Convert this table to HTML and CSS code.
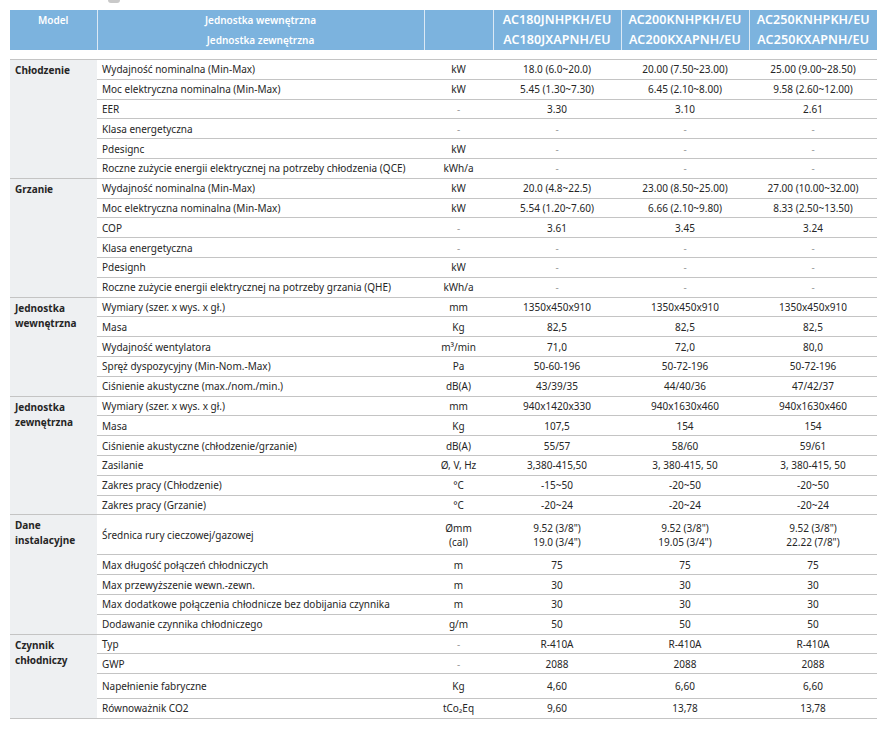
FILE: index.html
```html
<!DOCTYPE html>
<html lang="pl">
<head>
<meta charset="utf-8">
<link rel="stylesheet" href="styles.css">
</head>
<body>
<div class="deco"></div>
<table class="spec">
  <colgroup>
    <col class="c-model"><col class="c-label"><col class="c-unit"><col class="c-val"><col class="c-val"><col class="c-val">
  </colgroup>
  <thead>
    <tr class="head">
      <th class="h-model">Model</th>
      <th class="h-units">Jednostka wewnętrzna<br>Jednostka zewnętrzna</th>
      <th></th>
      <th class="h-name">AC180JNHPKH/EU<br>AC180JXAPNH/EU</th>
      <th class="h-name">AC200KNHPKH/EU<br>AC200KXAPNH/EU</th>
      <th class="h-name">AC250KNHPKH/EU<br>AC250KXAPNH/EU</th>
    </tr>
    <tr class="spacer"><td colspan="6"></td></tr>
  </thead>
  <tbody>
    <tr class="first"><th class="grp" rowspan="6">Chłodzenie</th><td class="lbl">Wydajność nominalna (Min-Max)</td><td class="unit">kW</td><td>18.0 (6.0~20.0)</td><td>20.00 (7.50~23.00)</td><td>25.00 (9.00~28.50)</td></tr>
    <tr><td class="lbl">Moc elektryczna nominalna (Min-Max)</td><td class="unit">kW</td><td>5.45 (1.30~7.30)</td><td>6.45 (2.10~8.00)</td><td>9.58 (2.60~12.00)</td></tr>
    <tr><td class="lbl">EER</td><td class="unit dash">-</td><td>3.30</td><td>3.10</td><td>2.61</td></tr>
    <tr><td class="lbl">Klasa energetyczna</td><td class="unit dash">-</td><td class="dash">-</td><td class="dash">-</td><td class="dash">-</td></tr>
    <tr><td class="lbl">Pdesignc</td><td class="unit">kW</td><td class="dash">-</td><td class="dash">-</td><td class="dash">-</td></tr>
    <tr><td class="lbl">Roczne zużycie energii elektrycznej na potrzeby chłodzenia (QCE)</td><td class="unit">kWh/a</td><td class="dash">-</td><td class="dash">-</td><td class="dash">-</td></tr>

    <tr class="first"><th class="grp" rowspan="6">Grzanie</th><td class="lbl">Wydajność nominalna (Min-Max)</td><td class="unit">kW</td><td>20.0 (4.8~22.5)</td><td>23.00 (8.50~25.00)</td><td>27.00 (10.00~32.00)</td></tr>
    <tr><td class="lbl">Moc elektryczna nominalna (Min-Max)</td><td class="unit">kW</td><td>5.54 (1.20~7.60)</td><td>6.66 (2.10~9.80)</td><td>8.33 (2.50~13.50)</td></tr>
    <tr><td class="lbl">COP</td><td class="unit dash">-</td><td>3.61</td><td>3.45</td><td>3.24</td></tr>
    <tr><td class="lbl">Klasa energetyczna</td><td class="unit dash">-</td><td class="dash">-</td><td class="dash">-</td><td class="dash">-</td></tr>
    <tr><td class="lbl">Pdesignh</td><td class="unit">kW</td><td class="dash">-</td><td class="dash">-</td><td class="dash">-</td></tr>
    <tr><td class="lbl">Roczne zużycie energii elektrycznej na potrzeby grzania (QHE)</td><td class="unit">kWh/a</td><td class="dash">-</td><td class="dash">-</td><td class="dash">-</td></tr>

    <tr class="first"><th class="grp" rowspan="5">Jednostka wewnętrzna</th><td class="lbl">Wymiary (szer. x wys. x gł.)</td><td class="unit">mm</td><td>1350x450x910</td><td>1350x450x910</td><td>1350x450x910</td></tr>
    <tr><td class="lbl">Masa</td><td class="unit">Kg</td><td>82,5</td><td>82,5</td><td>82,5</td></tr>
    <tr><td class="lbl">Wydajność wentylatora</td><td class="unit">m³/min</td><td>71,0</td><td>72,0</td><td>80,0</td></tr>
    <tr><td class="lbl">Spręż dyspozycyjny (Min-Nom.-Max)</td><td class="unit">Pa</td><td>50-60-196</td><td>50-72-196</td><td>50-72-196</td></tr>
    <tr><td class="lbl">Ciśnienie akustyczne (max./nom./min.)</td><td class="unit">dB(A)</td><td>43/39/35</td><td>44/40/36</td><td>47/42/37</td></tr>

    <tr class="first"><th class="grp" rowspan="6">Jednostka zewnętrzna</th><td class="lbl">Wymiary (szer. x wys. x gł.)</td><td class="unit">mm</td><td>940x1420x330</td><td>940x1630x460</td><td>940x1630x460</td></tr>
    <tr><td class="lbl">Masa</td><td class="unit">Kg</td><td>107,5</td><td>154</td><td>154</td></tr>
    <tr><td class="lbl">Ciśnienie akustyczne (chłodzenie/grzanie)</td><td class="unit">dB(A)</td><td>55/57</td><td>58/60</td><td>59/61</td></tr>
    <tr><td class="lbl">Zasilanie</td><td class="unit">Ø, V, Hz</td><td>3,380-415,50</td><td>3, 380-415, 50</td><td>3, 380-415, 50</td></tr>
    <tr><td class="lbl">Zakres pracy (Chłodzenie)</td><td class="unit">°C</td><td>-15~50</td><td>-20~50</td><td>-20~50</td></tr>
    <tr><td class="lbl">Zakres pracy (Grzanie)</td><td class="unit">°C</td><td>-20~24</td><td>-20~24</td><td>-20~24</td></tr>

    <tr class="first tall"><th class="grp" rowspan="5">Dane instalacyjne</th><td class="lbl">Średnica rury cieczowej/gazowej</td><td class="unit">Ømm<br>(cal)</td><td>9.52 (3/8")<br>19.0 (3/4")</td><td>9.52 (3/8")<br>19.05 (3/4")</td><td>9.52 (3/8")<br>22.22 (7/8")</td></tr>
    <tr><td class="lbl">Max długość połączeń chłodniczych</td><td class="unit">m</td><td>75</td><td>75</td><td>75</td></tr>
    <tr><td class="lbl">Max przewyższenie wewn.-zewn.</td><td class="unit">m</td><td>30</td><td>30</td><td>30</td></tr>
    <tr><td class="lbl">Max dodatkowe połączenia chłodnicze bez dobijania czynnika</td><td class="unit">m</td><td>30</td><td>30</td><td>30</td></tr>
    <tr><td class="lbl">Dodawanie czynnika chłodniczego</td><td class="unit">g/m</td><td>50</td><td>50</td><td>50</td></tr>

    <tr class="first"><th class="grp" rowspan="4">Czynnik chłodniczy</th><td class="lbl">Typ</td><td class="unit dash">-</td><td>R-410A</td><td>R-410A</td><td>R-410A</td></tr>
    <tr><td class="lbl">GWP</td><td class="unit dash">-</td><td>2088</td><td>2088</td><td>2088</td></tr>
    <tr class="mid"><td class="lbl">Napełnienie fabryczne</td><td class="unit">Kg</td><td>4,60</td><td>6,60</td><td>6,60</td></tr>
    <tr class="last"><td class="lbl">Równoważnik CO2</td><td class="unit">tCo₂Eq</td><td>9,60</td><td>13,78</td><td>13,78</td></tr>
  </tbody>
</table>
</body>
</html>
```

FILE: styles.css
```css
html, body {
  margin: 0;
  padding: 0;
  background: #ffffff;
}
body {
  padding: 0 0 0 10px;
  font-family: "Noto Sans", "Open Sans", sans-serif;
  color: #262626;
}
.deco {
  width: 12px;
  height: 3px;
  margin-left: 98px;
  border-radius: 0 0 8px 8px;
  background: #c9c9c9;
}
.spec {
  margin-top: 7px;
  border-collapse: collapse;
  table-layout: fixed;
  width: 867px;
  font-size: 10px;
}
.c-model { width: 87px; }
.c-label { width: 327px; }
.c-unit { width: 69px; }
.c-val { width: 128px; }

.head th {
  background: #7cb3de;
  color: #ffffff;
  height: 40px;
  padding: 0;
  border-left: 1px solid #dbe9f5;
  font-weight: 600;
  vertical-align: top;
}
.head th:first-child { border-left: none; }
.h-model {
  font-size: 10px;
  line-height: 20px;
}
.h-units {
  font-size: 10px;
  line-height: 20px;
}
.h-name {
  font-size: 12.5px;
  line-height: 20px;
  letter-spacing: 0.1px;
}
.spacer td {
  height: 9px;
  padding: 0;
}

tbody td {
  height: 19.8px;
  box-sizing: border-box;
  padding: 0;
  border-top: 1.5px solid #c4c4c4;
  text-align: center;
  vertical-align: middle;
  line-height: 14px;
  white-space: nowrap;
}
tbody td.lbl {
  text-align: left;
  padding-left: 5px;
}
tbody td.dash {
  color: #9a9a9a;
}
.grp {
  background: #eef0f2;
  border-top: 1.5px solid #c4c4c4;
  text-align: left;
  vertical-align: top;
  font-weight: 700;
  font-size: 10px;
  line-height: 15px;
  padding: 3px 6px 0 5px;
}
tr.tall td { height: 40px; }
tr.mid td { height: 24.6px; }
tr.last td { border-bottom: 1.5px solid #c4c4c4; }
.spec tbody tr:last-child { border-bottom: 1.5px solid #c4c4c4; }
```
